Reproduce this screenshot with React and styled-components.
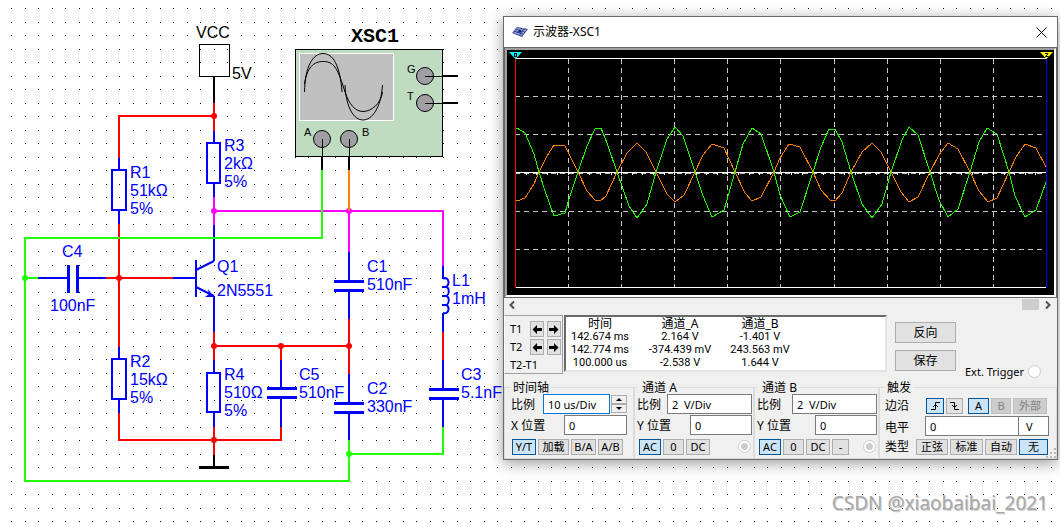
import React from 'react';
import styled, { createGlobalStyle } from 'styled-components';

const TRACE_A =
  '515,130 517,128 525,133 534,154 539,172 545,191 554,216 565,213 569,199 578,172 587,146 595,129 601,128 607,143 617,172 629,206 637,218 647,204 656,172 667,139 675,127 683,136 695,172 703,196 712,217 724,210 735,172 743,144 752,128 761,134 774,172 780,195 790,217 800,212 813,172 821,147 829,129 835,129 842,142 851,172 862,204 872,218 882,204 891,172 902,140 909,127 918,135 930,172 939,200 948,217 958,209 970,172 979,142 987,128 997,134 1009,172 1015,196 1025,217 1036,210 1046,182';
const TRACE_B =
  '515,200 517,201 525,198 534,184 539,172 547,156 554,145 565,146 578,172 587,191 595,200 600,201 606,196 617,172 627,153 637,143 646,152 656,172 667,194 675,202 684,195 695,172 703,155 712,144 724,148 735,172 745,193 752,201 761,197 774,172 780,158 789,144 800,147 813,172 821,190 830,200 835,201 842,193 851,172 862,152 872,143 881,152 891,172 901,192 909,202 918,197 930,172 939,155 948,143 958,149 970,172 979,191 988,202 997,198 1009,172 1016,157 1025,144 1036,148 1046,167';

const WIRES = [
  // supply and bias
  ['#000', 'M214 77V103M214 455V467'],
  ['#f00', 'M214 103V131M214 116H119V158M119 224V347M119 413V440H281V427'],
  ['#f00', 'M106 278H173M214 305V360M214 346H349M281 346V360M214 427V455'],
  ['#f00', 'M349 319V374M443 332V360'],
  ['#f0f', 'M214 197V225M214 211H443V266M349 211V252'],
  ['#00f', 'M119 158V169M119 211V224M119 347V358M119 400V413'],
  ['#00f', 'M214 131V142M214 184V197M214 225V261M214 296V332M214 360V372M214 413V427'],
  ['#00f', 'M38 278H68M79 278H106M173 278H196'],
  ['#00f', 'M281 360V388M281 398V427M349 252V281M349 291V319M349 374V403M349 413V440'],
  ['#00f', 'M443 266V279M443 313V332M443 360V389M443 399V427'],
  // probes
  ['#2f0', 'M322 170V238H25V481H349V440M25 278H38M349 454H443V427'],
  ['#ff8000', 'M349 170V211'],
  ['#000', 'M322 157V170M349 157V170M443 76H458M443 103H458'],
];

const DOTS = [
  [214, 116, '#f00'],
  [214, 211, '#f0f'],
  [349, 211, '#f0f'],
  [119, 278, '#f00'],
  [25, 278, '#2f0'],
  [214, 346, '#f00'],
  [281, 346, '#f00'],
  [349, 346, '#f00'],
  [214, 440, '#f00'],
  [349, 454, '#2f0'],
];

const PARTS = [
  [130, 178, ['R1', '51kΩ', '5%']],
  [224, 151, ['R3', '2kΩ', '5%']],
  [130, 367, ['R2', '15kΩ', '5%']],
  [224, 380, ['R4', '510Ω', '5%']],
  [299, 380, ['C5', '510nF']],
  [367, 272, ['C1', '510nF']],
  [367, 394, ['C2', '330nF']],
  [452, 286, ['L1', '1mH']],
  [461, 380, ['C3', '5.1nF']],
  [62, 257, ['C4']],
  [50, 311, ['100nF']],
  [217, 272, ['Q1']],
  [217, 296, ['2N5551']],
];

const READINGS = [
  ['142.674 ms', '2.164 V', '-1.401 V'],
  ['142.774 ms', '-374.439 mV', '243.563 mV'],
  ['100.000 us', '-2.538 V', '1.644 V'],
];

const Schematic = () => (
  <Canvas>
    <defs>
      <pattern id="dots" width="27" height="27" patternUnits="userSpaceOnUse">
        <path d="M11 8h1v1h-1zM25 8h1v1h-1zM11 22h1v1h-1zM25 22h1v1h-1z" />
      </pattern>
    </defs>
    <rect width="100%" height="100%" fill="url(#dots)" />
    <rect x="199.5" y="44.5" width="30" height="32" fill="none" stroke="#000" />

    <g fill="none" strokeWidth="2" shapeRendering="crispEdges">
      {WIRES.map(([color, d]) => (
        <path key={d} d={d} stroke={color} />
      ))}
      <g stroke="#00f">
        <rect x="112" y="170" width="14" height="40" />
        <rect x="207" y="143" width="13" height="40" />
        <rect x="112" y="359" width="14" height="40" />
        <rect x="207" y="373" width="13" height="39" />
      </g>
      <g stroke="#00f" strokeWidth="3">
        <path d="M68.500 265V293M77.500 265V293M267 388.500H297M267 397.500H297" />
        <path d="M334 281.500H364M334 290.500H364M334 403.500H364M334 412.500H364" />
        <path d="M429 389.500H459M429 398.500H459" />
      </g>
      <path d="M199 467.500H229" stroke="#000" strokeWidth="3" />
    </g>
    <g fill="none" stroke="#00f" strokeWidth="2">
      <path d="M196 260V297M196 270L214 261M196 287L214 296" />
      <path d="M443 278.500C450 276 450 287 445 287H442H445C450 286 450 296 445 296H442H445C450 295 450 305 445 305H442H445C450 304 450 315 443 313" />
    </g>
    <path d="M208 289L214 297H205L209 294Z" fill="#00f" />
    {DOTS.map(([x, y, color]) => (
      <circle key={`${x}-${y}`} cx={x} cy={y} r="3" fill={color} />
    ))}
    <path d="M349 205V211" stroke="#ff8000" strokeWidth="2" />

    <g shapeRendering="crispEdges">
      <rect x="295.500" y="49.500" width="147" height="107" fill="#c0dcc0" stroke="#000" />
      <rect x="299.500" y="53.500" width="94" height="67" fill="#c0c0c0" stroke="#fff" />
    </g>
    <g fill="none" stroke="#000">
      <path d="M304.500 92C305 66 313 53.500 323 53.500S340 65 342 92M345 85C346 108 354 120 363 120S381 108 382.500 85" />
      <path d="M304.500 84C307 67 314 61.500 323 61.500S336 65 342.500 84L345 92C349 104 355 111.500 363 111.500S381 104 382.500 92" />
      <g fill="#a0a0a4">
        <circle cx="425" cy="76" r="8.500" />
        <circle cx="425" cy="103" r="8.500" />
        <circle cx="322" cy="139" r="8.500" />
        <circle cx="349" cy="139" r="8.500" />
      </g>
      <path d="M425 76.500H443M425 103.500H443M322.500 139V157M349.500 139V157" />
    </g>

    <text x="196" y="38">VCC</text>
    <text x="232" y="79">5V</text>
    {PARTS.map(([x, y, lines]) => (
      <text key={`${x}-${y}`} fill="#00f">
        {lines.map((line, i) => (
          <tspan key={line} x={x} y={y + i * 18}>
            {line}
          </tspan>
        ))}
      </text>
    ))}
    <InstrumentName x="351" y="42">
      XSC1
    </InstrumentName>
    <PinName x="407" y="73">G</PinName>
    <PinName x="407" y="100">T</PinName>
    <PinName x="304" y="136">A</PinName>
    <PinName x="362" y="136">B</PinName>
  </Canvas>
);

const ScopeScreen = () => {
  const cols = [568, 621, 674, 727, 780, 834, 887, 940, 993];
  const rows = [96, 134, 173, 211, 249];
  const ticks = Array.from({ length: 49 }, (_, i) => 515 + Math.round((i + 1) * 10.62));
  return (
    <Screen viewBox="507 50 547 245" role="img" aria-label="XSC1">
      <g shapeRendering="crispEdges" fill="none">
        <g stroke="#c8c8c8" strokeDasharray="5 4">
          {cols.map(x => (
            <path key={x} d={`M${x + 0.5} 59V287`} />
          ))}
          {rows.map(y => (
            <path key={y} d={`M515 ${y + 0.5}H1046`} />
          ))}
        </g>
        <path d="M515 58.500H1047M515 287.500H1047M515 172.500H1047" stroke="#fff" />
        {ticks.map(x => (
          <path key={x} d={`M${x + 0.5} 173V175`} stroke="#fff" />
        ))}
        <polyline points={TRACE_B} stroke="#ff8000" />
        <polyline points={TRACE_A} stroke="#2f0" />
        <path d="M515.500 58V288" stroke="#f00" />
        <path d="M1046.500 58V288" stroke="#00f" />
      </g>
      <path d="M509 52H522L515.500 59Z" fill="#0ff" />
      <path d="M514 53H517V57H514ZM515 54V56H516V54Z" fill="#000" />
      <path d="M1040 52H1053L1046.500 59Z" fill="#ff0" />
      <path d="M1045 53.500H1048L1045.500 56.500H1048.500" fill="none" stroke="#000" />
    </Screen>
  );
};

const AppIcon = () => (
  <svg width="16" height="12" viewBox="0 0 16 12" aria-hidden="true">
    <path d="M5 1L16 3L10 11L0 7Z" fill="#34449c" />
    <path d="M3 4L12 7M4 2L14 5M1 6L10 9M8 1L3 8M11 2L6 9M14 3L9 10" stroke="#a9b5e2" strokeWidth="0.7" />
    <path d="M7 4L10 5L8 7L6 6Z" fill="#20286a" />
    <path d="M12 2L14 2.500" stroke="#d29050" />
  </svg>
);

const Arrow = ({ flip }) => (
  <svg width="10" height="9" viewBox="0 0 10 9" aria-hidden="true">
    <path d={flip ? 'M9.500 4.500L5 0V3H0V6H5V9Z' : 'M0.500 4.500L5 0V3H10V6H5V9Z'} />
  </svg>
);

const EdgeIcon = ({ falling }) => (
  <svg width="9" height="10" viewBox="0 0 9 10" fill="none" stroke="#000" aria-hidden="true">
    <path d={falling ? 'M0 1.500H4.500V8.500H9M2 4L4.500 6.500L7 4' : 'M0 8.500H4.500V1.500H9M2 6L4.500 3.500L7 6'} />
  </svg>
);

const Channel = ({ name, extra }) => (
  <Group>
    <Legend $indent={5}>通道 {name}</Legend>
    <Row>
      <label htmlFor={`scale-${name}`}>比例</label>
      <Field id={`scale-${name}`} $width={85} defaultValue="2  V/Div" />
    </Row>
    <Row $height={22}>
      <label htmlFor={`pos-${name}`}>Y 位置</label>
      <Field id={`pos-${name}`} $width={62} defaultValue="0" />
    </Row>
    <ButtonRow $indent={2}>
      <Key $width={22} $on>AC</Key>
      <Key $width={21}>0</Key>
      <Key $width={24}>DC</Key>
      {extra && <Key $width={17}>-</Key>}
      <Radio type="radio" aria-label={`通道 ${name}`} disabled defaultChecked />
    </ButtonRow>
  </Group>
);

const Oscilloscope = () => (
  <Window>
    <TitleBar>
      <AppIcon />
      <Title>示波器-XSC1</Title>
      <CloseButton aria-label="Close">
        <svg width="11" height="11" viewBox="0 0 11 11" stroke="#000" aria-hidden="true">
          <path d="M0.500 0.500L10.500 10.500M10.500 0.500L0.500 10.500" />
        </svg>
      </CloseButton>
    </TitleBar>
    <ScopeFrame>
      <ScopeScreen />
    </ScopeFrame>
    <ScrollBar>
      <ScrollButton aria-label="Left">
        <svg width="6" height="8" viewBox="0 0 6 8" aria-hidden="true">
          <path d="M5 0.500L1.500 4L5 7.500" />
        </svg>
      </ScrollButton>
      <Thumb />
      <ScrollButton aria-label="Right">
        <svg width="6" height="8" viewBox="0 0 6 8" aria-hidden="true">
          <path d="M1 0.500L4.500 4L1 7.500" />
        </svg>
      </ScrollButton>
    </ScrollBar>

    <Measurements>
      <Cursors>
        {['T1', 'T2'].map(t => (
          <CursorRow key={t}>
            <span>{t}</span>
            <ArrowKey aria-label={`${t} left`}>
              <Arrow />
            </ArrowKey>
            <ArrowKey aria-label={`${t} right`}>
              <Arrow flip />
            </ArrowKey>
          </CursorRow>
        ))}
        <span>T2-T1</span>
      </Cursors>
      <Readout>
        <table>
          <thead>
            <tr>
              <th>时间</th>
              <th>通道_A</th>
              <th>通道_B</th>
            </tr>
          </thead>
          <tbody>
            {READINGS.map(row => (
              <tr key={row[0]}>
                {row.map(cell => (
                  <td key={cell}>{cell}</td>
                ))}
              </tr>
            ))}
          </tbody>
        </table>
      </Readout>
      <Actions>
        <ActionButton>反向</ActionButton>
        <ActionButton>保存</ActionButton>
      </Actions>
      <ExtTrigger>
        Ext. Trigger
        <Radio type="radio" disabled />
      </ExtTrigger>
    </Measurements>

    <Groups>
      <Group $pad={6}>
        <Legend>时间轴</Legend>
        <Row>
          <label htmlFor="timebase">比例</label>
          <Stepper>
            <Field id="timebase" $width={67} $focused defaultValue="10 us/Div" />
            <Spin>
              <SpinKey aria-label="Up">
                <svg width="6" height="3" viewBox="0 0 6 3"><path d="M0 3L3 0L6 3Z" /></svg>
              </SpinKey>
              <SpinKey aria-label="Down">
                <svg width="6" height="3" viewBox="0 0 6 3"><path d="M0 0L3 3L6 0Z" /></svg>
              </SpinKey>
            </Spin>
          </Stepper>
        </Row>
        <Row $height={22}>
          <label htmlFor="xpos">X 位置</label>
          <Field id="xpos" $width={63} defaultValue="0" />
        </Row>
        <ButtonRow $indent={1}>
          <Key $width={24} $on>Y/T</Key>
          <Key $width={31}>加载</Key>
          <Key $width={25}>B/A</Key>
          <Key $width={25}>A/B</Key>
        </ButtonRow>
      </Group>
      <Channel name="A" />
      <Channel name="B" extra />
      <Group $pad={5}>
        <Legend>触发</Legend>
        <TriggerRow>
          <TriggerLabel $width={39}>边沿</TriggerLabel>
          <Key $width={18} $on aria-label="Rising">
            <EdgeIcon />
          </Key>
          <Key $width={17} aria-label="Falling">
            <EdgeIcon falling />
          </Key>
          <Source>
            <Key $width={21} $on>A</Key>
            <Key $width={20} disabled>B</Key>
            <Key $width={34} disabled>外部</Key>
          </Source>
        </TriggerRow>
        <TriggerRow $height={22}>
          <TriggerLabel as="label" htmlFor="level" $width={38}>电平</TriggerLabel>
          <LevelBox>
            <Field id="level" $width={94} defaultValue="0" />
            <Field aria-label="单位" $width={31} defaultValue="V" />
          </LevelBox>
        </TriggerRow>
        <TriggerRow $height={19}>
          <TriggerLabel $width={29}>类型</TriggerLabel>
          <Key $width={32}>正弦</Key>
          <Key $width={33}>标准</Key>
          <Key $width={32}>自动</Key>
          <Key $width={29} $on>无</Key>
        </TriggerRow>
      </Group>
    </Groups>
    <Grip width="11" height="11" viewBox="0 0 11 11" aria-hidden="true">
      <path d="M8 0h2v2h-2zM4 4h2v2h-2zM8 4h2v2h-2zM0 8h2v2h-2zM4 8h2v2h-2zM8 8h2v2h-2z" />
    </Grip>
  </Window>
);

const App = () => (
  <Desktop>
    <GlobalStyle />
    <Schematic />
    <Oscilloscope />
    <Watermark>CSDN @xiaobaibai_2021</Watermark>
  </Desktop>
);

const GlobalStyle = createGlobalStyle`
  * {
    box-sizing: border-box;
  }

  body {
    margin: 0;
    background: #fff;
  }

  button, input {
    font: inherit;
    color: inherit;
    border-radius: 0;
    margin: 0;
    padding: 0;
  }
`;

const Desktop = styled.main`
  position: relative;
  min-height: 100vh;
  overflow: hidden;
`;

const Canvas = styled.svg`
  display: block;
  width: 100%;
  height: 100vh;
  font: 16px 'Liberation Sans', Arial, sans-serif;
`;

const InstrumentName = styled.text`
  font: bold 20px 'Liberation Mono', 'Courier New', monospace;
`;

const PinName = styled.text`
  font-size: 11px;
`;

const Window = styled.section`
  position: absolute;
  left: 503px;
  top: 16px;
  width: 555px;
  background: #f0f0f0;
  border: 1px solid #6b6b6b;
  box-shadow: 0 3px 14px rgba(0, 0, 0, 0.4);
  font: 11px 'Noto Sans', 'Noto Sans CJK SC', Tahoma, sans-serif;
  color: #000;
`;

const TitleBar = styled.header`
  display: flex;
  align-items: center;
  gap: 5px;
  height: 30px;
  padding: 0 10px 0 8px;
  background: #fff;
`;

const Title = styled.h1`
  flex: 1;
  margin: 0;
  font-size: 12px;
  line-height: 16px;
  font-weight: normal;
`;

const CloseButton = styled.button`
  display: flex;
  border: 0;
  background: none;
`;

const ScopeFrame = styled.div`
  border: 1px solid #696969;
  background: #000;
`;

const Screen = styled.svg`
  display: block;
  width: 100%;
  border: 2px solid;
  border-color: #a0a0a0 #fff #fff #a0a0a0;
`;

const ScrollBar = styled.div`
  display: flex;
  justify-content: flex-end;
  align-items: flex-start;
  height: 17px;
  padding: 1px 4px 1px 3px;
`;

const ScrollButton = styled.button`
  display: flex;
  align-items: center;
  justify-content: center;
  width: 10px;
  height: 11px;
  border: 0;
  background: none;

  &:first-child {
    margin-right: auto;
  }

  path {
    fill: none;
    stroke: #505050;
    stroke-width: 2;
  }
`;

const Thumb = styled.div`
  width: 17px;
  height: 11px;
  margin-right: 4px;
  background: #cdcdcd;
`;

const Measurements = styled.div`
  display: flex;
  align-items: flex-start;
  height: 66px;
`;

const Cursors = styled.div`
  display: flex;
  flex-direction: column;
  width: 59px;
  height: 59px;
  margin-right: 1px;
  padding: 4px 1px 0 5px;
  border: 1px solid #a0a0a0;
  border-left-color: #fff;
  line-height: 18px;
`;

const CursorRow = styled.div`
  display: flex;
  align-items: center;
  gap: 3px;
  height: 18px;

  span {
    flex: 1;
  }
`;

const ArrowKey = styled.button`
  display: flex;
  align-items: center;
  justify-content: center;
  width: 14px;
  height: 16px;
  border: 1px solid #adadad;
  background: #e1e1e1;
`;

const Readout = styled.div`
  width: 323px;
  height: 57px;
  background: #fff;
  border: 2px solid;
  border-color: #696969 #e3e3e3 #e3e3e3 #696969;

  table {
    border-collapse: collapse;
    table-layout: fixed;
    width: 228px;
    text-align: center;
    line-height: 13px;
  }

  th {
    padding: 0;
    width: 68px;
    font-size: 12px;
    font-weight: normal;
  }

  th:nth-child(2) {
    width: 92px;
  }

  td {
    padding: 0;
    font-family: Roboto, sans-serif;
    white-space: nowrap;
  }
`;

const Actions = styled.div`
  display: flex;
  flex-direction: column;
  gap: 7px;
  padding: 7px 8px 0;
`;

const ActionButton = styled.button`
  width: 61px;
  height: 21px;
  border: 1px solid #adadad;
  background: #e1e1e1;
  font-size: 12px;
  line-height: 18px;
`;

const ExtTrigger = styled.label`
  display: flex;
  flex: 1;
  align-items: center;
  justify-content: space-between;
  align-self: flex-end;
  margin: 0 16px 2px 1px;
  white-space: nowrap;
`;

const Radio = styled.input`
  appearance: none;
  width: 13px;
  height: 13px;
  border: 1px solid #ccc;
  border-radius: 50%;
  background: #fff;

  &:checked {
    background: radial-gradient(circle, #ccc 3px, #fff 4px);
  }
`;

const Groups = styled.div`
  display: grid;
  grid-template-columns: 130px 120px 125px 1fr;
`;

const Group = styled.fieldset`
  min-width: 0;
  margin: 0;
  padding: 0 1px 3px ${({ $pad }) => $pad || 2}px;
  border: 1px solid #dcdcdc;
  font-size: 12px;
`;

const Legend = styled.legend`
  height: 13px;
  padding: 0 2px 0 ${({ $indent }) => $indent || 2}px;
  line-height: 13px;
`;

const Row = styled.div`
  display: flex;
  align-items: center;
  justify-content: space-between;
  height: ${({ $height }) => $height || 20}px;

  fieldset:first-child > & {
    padding-right: 5px;
  }
`;

const ButtonRow = styled.div`
  display: flex;
  align-items: flex-end;
  gap: 2px;
  height: 19px;
  padding: 0 1px 0 ${({ $indent }) => $indent}px;

  ${Radio} {
    margin: 0 0 2px auto;
  }
`;

const Field = styled.input`
  width: ${({ $width }) => $width}px;
  height: 20px;
  padding: 0 4px;
  border: 1px solid ${({ $focused }) => ($focused ? '#0078d7' : '#7a7a7a')};
  background: #fff;
  font-size: 11px;
`;

const Key = styled.button`
  display: flex;
  align-items: center;
  justify-content: center;
  width: ${({ $width }) => $width}px;
  height: 16px;
  border: 1px solid ${({ $on }) => ($on ? '#005499' : '#adadad')};
  background: ${({ $on }) => ($on ? '#cce4f7' : '#e1e1e1')};
  font-size: 11px;
  line-height: 14px;
  white-space: nowrap;

  &:disabled {
    border-color: #bfbfbf;
    background: #ccc;
    color: #838383;
  }
`;

const Stepper = styled.div`
  display: flex;
  gap: 1px;
`;

const Spin = styled.div`
  display: flex;
  flex-direction: column;
  padding: 1px 0;
`;

const SpinKey = styled.button`
  display: flex;
  align-items: center;
  justify-content: center;
  width: 16px;
  height: 9px;
  border: 1px solid #adadad;
  background: #f0f0f0;
`;

const TriggerRow = styled.div`
  display: flex;
  align-items: flex-end;
  gap: 2px;
  height: ${({ $height }) => $height || 20}px;
`;

const TriggerLabel = styled.span`
  width: ${({ $width }) => $width}px;
  line-height: 16px;
`;

const Source = styled.div`
  display: flex;
  gap: 2px;
  padding-left: 3px;
`;

const LevelBox = styled.div`
  display: flex;

  input + input {
    margin-left: -1px;
    padding-left: 7px;
  }
`;

const Grip = styled.svg`
  position: absolute;
  right: 0;
  bottom: 0;
  fill: #b8b8b8;
`;

const Watermark = styled.div`
  position: absolute;
  right: 12px;
  bottom: 6px;
  font: 19px/28px 'Noto Sans', sans-serif;
  color: #a8a8a8;
  text-shadow: 1px 1px 0 #d0d0d0;
`;

export default App;
